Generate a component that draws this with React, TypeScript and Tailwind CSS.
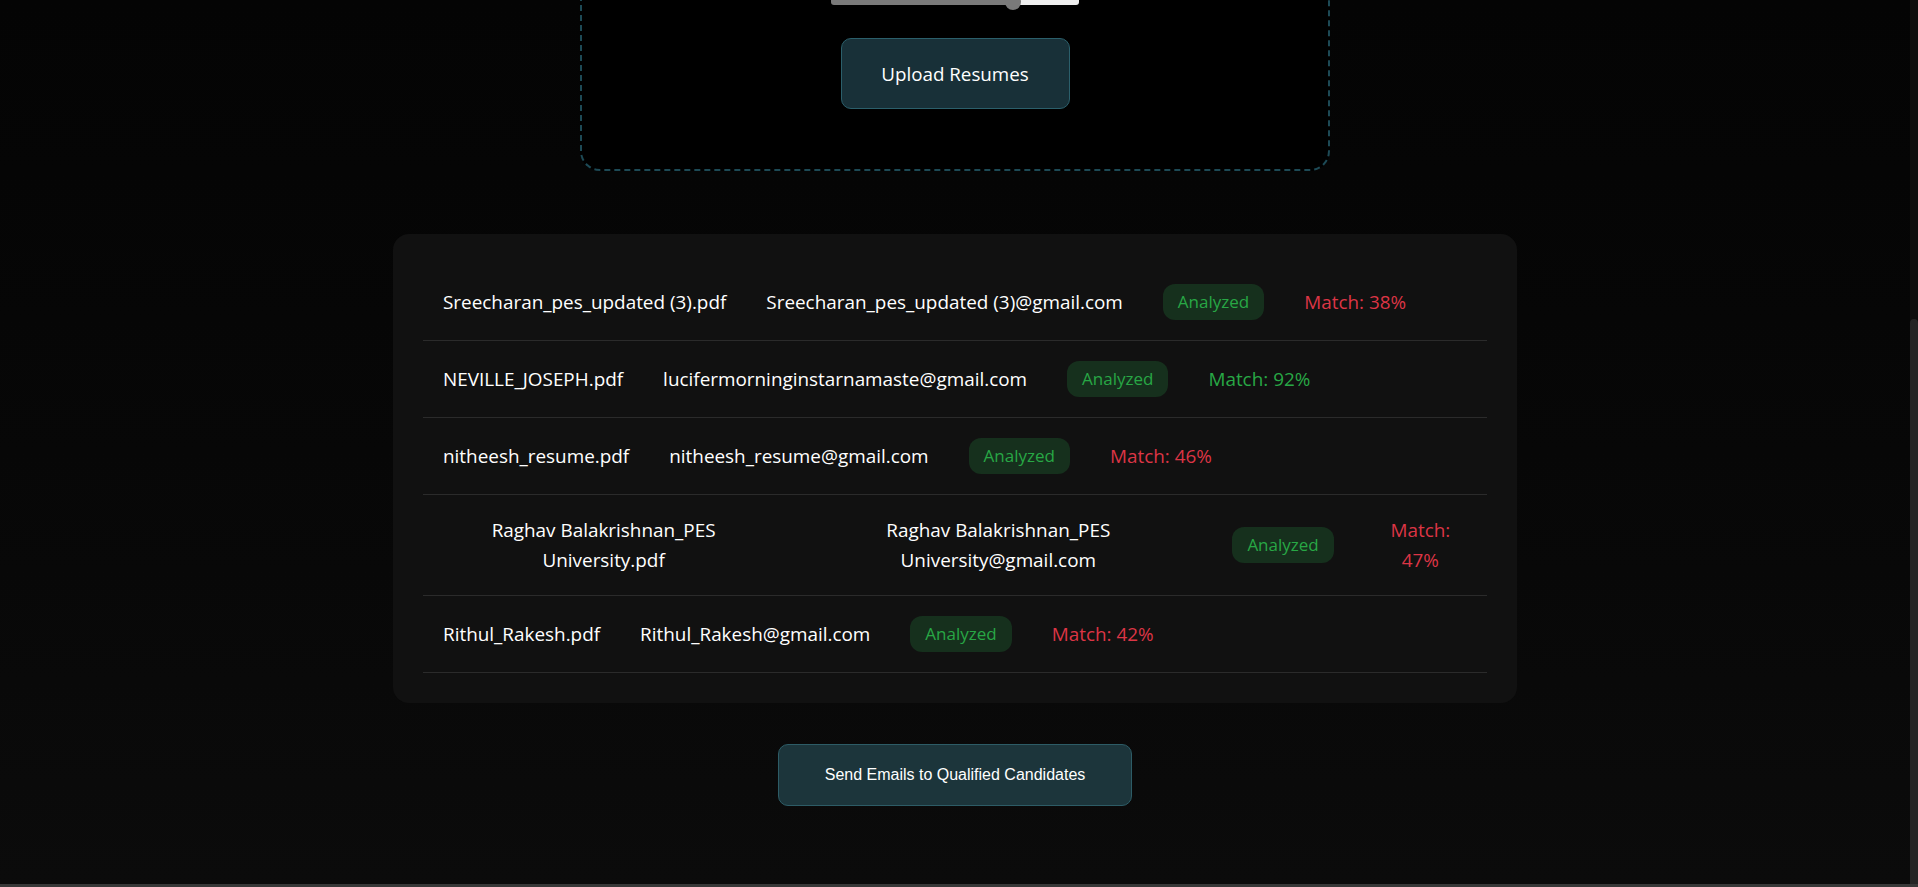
import React from "react";

type Row = { file: string; email: string; match: number };

const rows: Row[] = [
  { file: "Sreecharan_pes_updated (3).pdf", email: "Sreecharan_pes_updated (3)@gmail.com", match: 38 },
  { file: "NEVILLE_JOSEPH.pdf", email: "lucifermorninginstarnamaste@gmail.com", match: 92 },
  { file: "nitheesh_resume.pdf", email: "nitheesh_resume@gmail.com", match: 46 },
  { file: "Raghav Balakrishnan_PES University.pdf", email: "Raghav Balakrishnan_PES University@gmail.com", match: 47 },
  { file: "Rithul_Rakesh.pdf", email: "Rithul_Rakesh@gmail.com", match: 42 },
];

export default function App() {
  return (
    <div className="flex h-[887px] w-full flex-col overflow-hidden bg-[#0a0a0a] font-['Open_Sans',sans-serif] text-white">
      <div className="flex h-[884px] w-full">
        <div className="flex flex-1 flex-col items-center bg-gradient-to-b from-[#040404] to-[#0b0b0b]">
          <div className="-mt-[40px] flex w-[750px] flex-col items-center rounded-[20px] border-2 border-dashed border-[#1d4a56] bg-black pb-[60px] pt-[37px]">
            <div className="relative flex h-[6px] w-[248px]">
              <div className="h-full w-[182px] rounded-bl-[3px] bg-[#7a7a7a]" />
              <div className="h-full flex-1 rounded-br-[3px] bg-[#efefef]" />
              <div className="absolute left-[174px] top-[-5px] h-[16px] w-[16px] rounded-full bg-[#7a7a7a]" />
            </div>
            <button className="mt-[33px] flex h-[71px] w-[229px] items-center justify-center rounded-[10px] border border-[#2b5f6b] bg-[#183038] pt-[2px] text-[18.8px] text-white">
              Upload Resumes
            </button>
          </div>

          <div className="mt-[63px] w-[1124px] rounded-[16px] bg-[#111111] p-[30px]">
            {rows.map((r) => (
              <div
                key={r.file}
                className="flex items-center gap-10 border-b border-[#2b2b2b] px-5 py-5 text-center text-[18.9px] leading-[30px]"
              >
                <span>{r.file}</span>
                <span>{r.email}</span>
                <span className="shrink-0 rounded-[12px] bg-[#16301d] px-[15px] text-[17px] leading-[36px] text-[#28a745]">
                  Analyzed
                </span>
                <span className={r.match >= 50 ? "text-[#28a745]" : "text-[#dc3545]"}>
                  Match: {r.match}%
                </span>
              </div>
            ))}
          </div>

          <button className="mt-[41px] h-[62px] w-[354px] rounded-[10px] border border-[#2d5c66] bg-[#1c353b] font-['Liberation_Sans',Arial,sans-serif] text-[16px] text-white">
            Send Emails to Qualified Candidates
          </button>
        </div>
        <div className="flex w-[8px] flex-col bg-[#0e0e0e]">
          <div className="h-[319px]" />
          <div className="flex-1 rounded-t-[4px] bg-[#252525]" />
        </div>
      </div>
      <div className="h-[3px] w-full bg-[#383838]" />
    </div>
  );
}
